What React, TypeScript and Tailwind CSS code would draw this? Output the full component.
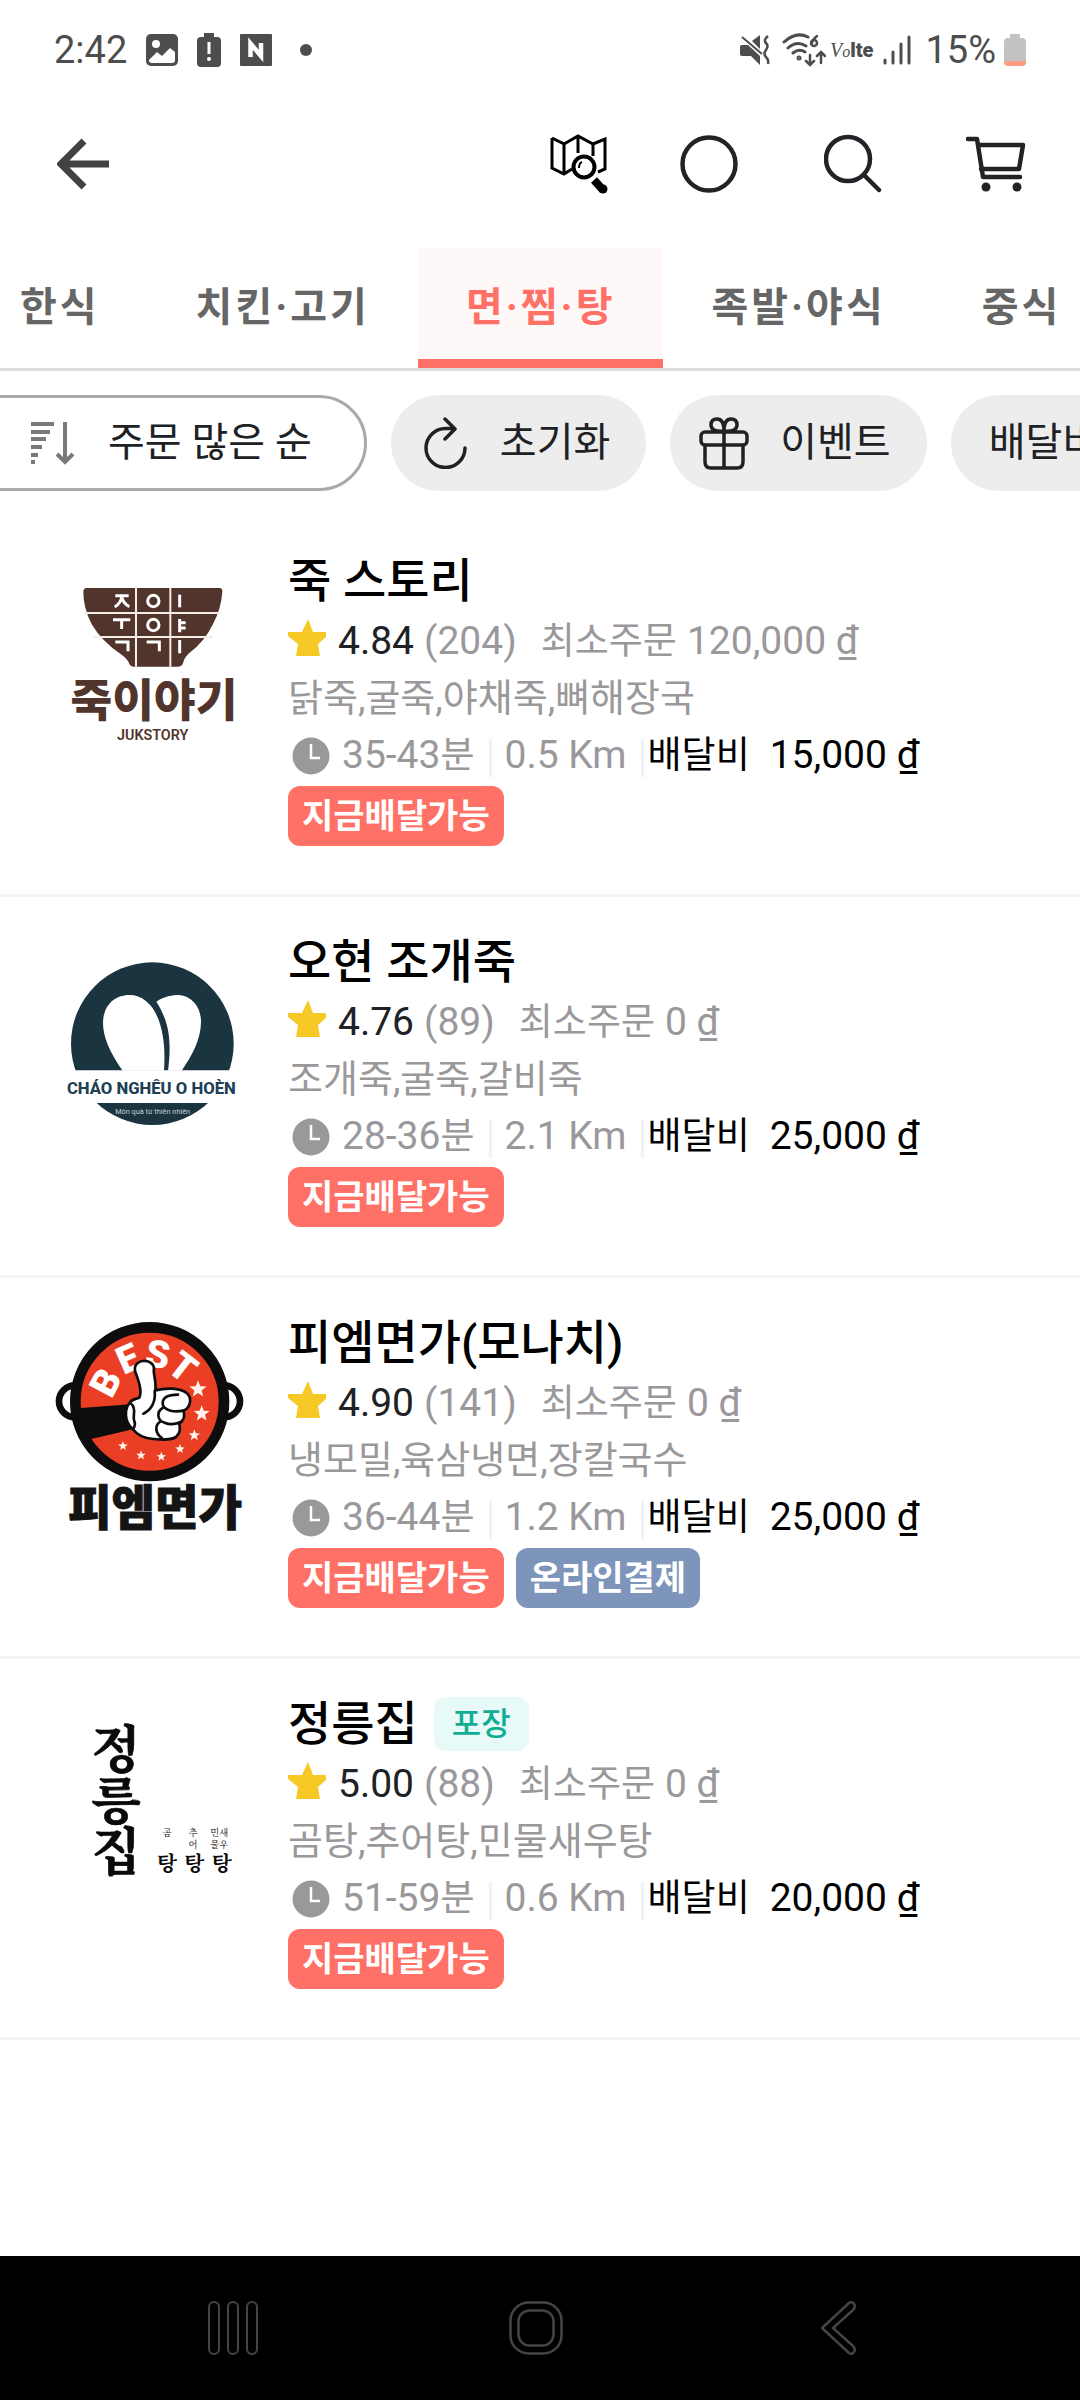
import React, { useState } from 'react';

interface Store {
  id: number;
  name: string;
  rating: string;
  reviews: number;
  minOrder: string;
  menus: string;
  time: string;
  distance: string;
  fee: string;
  takeout?: boolean;
  onlinePayment?: boolean;
  Logo: React.FC;
}

// Star polygon used inside the round badge logo
const starPoints = (cx: number, cy: number, r: number) =>
  Array.from({ length: 10 }, (_, i) => {
    const radius = i % 2 === 0 ? r : r * 0.42;
    const angle = -Math.PI / 2 + (i * Math.PI) / 5;
    return `${(cx + radius * Math.cos(angle)).toFixed(1)},${(cy + radius * Math.sin(angle)).toFixed(1)}`;
  }).join(' ');

const JukStoryLogo: React.FC = () => (
  <svg viewBox="0 0 720 780" className="h-[260px] w-[240px]" role="img" aria-label="죽이야기">
    <path
      d="M140 150h398q10 0 9 12-4 52-28 96-26 54-72 88-14 12-18 30-4 10-14 10H280q-8 0-12-8-4-14-26-30-56-38-86-88-26-48-26-98 0-12 10-12z"
      fill="#51342b"
    />
    <path d="M288 150v236M391 150v236M135 225h408M160 297h358" stroke="#f6eee6" strokeWidth="6" fill="none" />
    <g fill="none" stroke="#fff" strokeWidth="9">
      <path d="M226 173h40M246 175q-4 22-22 32M246 180q6 18 22 26" />
      <circle cx="340" cy="189" r="17" />
      <path d="M419 170v38" />
      <path d="M219 245h52M245 247v26" />
      <circle cx="340" cy="261" r="17" />
      <path d="M419 243v40M419 254h18M419 270h18" />
      <path d="M226 312h38v28M320 312h38v28M419 306v40" />
    </g>
    <text x="342" y="536" textAnchor="middle" fontSize="136" fontWeight="900" fill="#51342b" className="font-['Noto_Sans_CJK_KR',sans-serif]">
      죽이야기
    </text>
    <text x="338" y="606" textAnchor="middle" fontSize="43" fontWeight="600" fill="#51342b" className="font-['Roboto',sans-serif]">
      JUKSTORY
    </text>
  </svg>
);

const OHoenLogo: React.FC = () => (
  <svg viewBox="0 0 720 780" className="h-[260px] w-[240px]" role="img" aria-label="Cháo nghêu O Hoèn">
    <circle cx="337" cy="374" r="244" fill="#1a3440" />
    <path d="M80 454h510v98H80z" fill="#fff" />
    <path d="M248 455C208 400 189 352 189 312c0-52 34-84 79-84 68 0 114 82 104 227z" fill="#fff" />
    <path d="M384 455c12-92 2-150-35-207 24-16 48-20 68-20 40 4 66 36 66 80 0 52-26 100-58 147z" fill="#fff" />
    <text x="334" y="524" textAnchor="middle" fontSize="50" fontWeight="800" fill="#1f3f55" className="font-['Roboto',sans-serif]">
      CHÁO NGHÊU O HOÈN
    </text>
    <text x="338" y="585" textAnchor="middle" fontSize="22" fill="#c5d0d6" className="font-['Roboto',sans-serif]">
      Món quà từ thiên nhiên
    </text>
  </svg>
);

const PmNoodleLogo: React.FC = () => (
  <svg viewBox="0 0 720 780" className="h-[260px] w-[240px]" role="img" aria-label="피엠면가">
    <circle cx="105" cy="304" r="48" fill="#fff" stroke="#0d0d0d" strokeWidth="20" />
    <circle cx="552" cy="304" r="48" fill="#fff" stroke="#0d0d0d" strokeWidth="20" />
    <circle cx="329" cy="305" r="223" fill="#ea3f25" stroke="#0d0d0d" strokeWidth="32" />
    <path d="M112 325l160-12 10 74-128 30-40-8z" fill="#0d0d0d" />
    <g fill="#fff" fontSize="114" fontWeight="900" textAnchor="middle" className="font-['Roboto',sans-serif]">
      <text transform="translate(232 266) rotate(-62)">B</text>
      <text transform="translate(280 212) rotate(-24)">E</text>
      <text transform="translate(348 202) rotate(8)">S</text>
      <text transform="translate(404 232) rotate(38)">T</text>
    </g>
    {/* Thumbs-up hand */}
    <g fill="#fff" stroke="#0d0d0d" strokeWidth="8" strokeLinejoin="round" strokeLinecap="round">
      <path d="M272 305c-20 20-20 60 6 82 12 16 32 28 62 30 44 4 68 2 74-14 10-10 4-26 4-32 14-10 18-26 12-38 24-12 26-40 10-54-22-16-62-16-94-8 4-28-8-50-4-66-2-16-18-24-34-22-22 4-28 20-20 38 10 28 18 52 10 72-12 4-22 6-26 12z" />
      <path d="M274 312c16 12 4 34 8 48 4 10 2 22-4 28M344 273c4 34-12 58-34 68" fill="none" />
      <path d="M414 284c-30 0-46 10-46 26 0 22 36 28 62 22M368 324c-20 12-16 38 6 44 14 6 34 4 48-2M362 364c-18 10-18 36 4 50" fill="none" />
    </g>
    <g fill="#fff4ea">
      <polygon points={starPoints(474, 268, 27)} />
      <polygon points={starPoints(485, 341, 25)} />
      <polygon points={starPoints(463, 406, 18)} />
      <polygon points={starPoints(420, 447, 15)} />
      <polygon points={starPoints(364, 470, 15)} />
      <polygon points={starPoints(303, 466, 15)} />
      <polygon points={starPoints(249, 438, 15)} />
    </g>
    <text x="345" y="676" textAnchor="middle" fontSize="142" fontWeight="900" fill="#141414" stroke="#141414" strokeWidth="3" className="font-['Noto_Sans_CJK_KR',sans-serif]">
      피엠면가
    </text>
  </svg>
);

const JeongneungLogo: React.FC = () => (
  <svg viewBox="0 0 720 780" className="h-[260px] w-[240px]" role="img" aria-label="정릉집">
    <g fill="#0a0a0a" textAnchor="middle" className="font-['Noto_Serif_CJK_KR','Noto_Sans_CJK_KR',sans-serif]">
      <g fontSize="154" fontWeight="700" stroke="#0a0a0a" strokeWidth="2">
        <text x="228" y="262">정</text>
        <text x="228" y="414">릉</text>
        <text x="228" y="566">집</text>
      </g>
      <g fontSize="28">
        <text x="381" y="465">곰</text>
        <text x="459" y="465">추</text>
        <text x="459" y="501">어</text>
        <text x="538" y="465">민새</text>
        <text x="538" y="501">물우</text>
      </g>
      <g fontSize="62" fontWeight="700">
        <text x="381" y="570">탕</text>
        <text x="463" y="570">탕</text>
        <text x="545" y="570">탕</text>
      </g>
    </g>
  </svg>
);

const stores: Store[] = [
  {
    id: 1,
    name: '죽 스토리',
    rating: '4.84',
    reviews: 204,
    minOrder: '120,000',
    menus: '닭죽,굴죽,야채죽,뼈해장국',
    time: '35-43',
    distance: '0.5',
    fee: '15,000',
    Logo: JukStoryLogo,
  },
  {
    id: 2,
    name: '오현 조개죽',
    rating: '4.76',
    reviews: 89,
    minOrder: '0',
    menus: '조개죽,굴죽,갈비죽',
    time: '28-36',
    distance: '2.1',
    fee: '25,000',
    Logo: OHoenLogo,
  },
  {
    id: 3,
    name: '피엠면가(모나치)',
    rating: '4.90',
    reviews: 141,
    minOrder: '0',
    menus: '냉모밀,육삼냉면,장칼국수',
    time: '36-44',
    distance: '1.2',
    fee: '25,000',
    onlinePayment: true,
    Logo: PmNoodleLogo,
  },
  {
    id: 4,
    name: '정릉집',
    rating: '5.00',
    reviews: 88,
    minOrder: '0',
    menus: '곰탕,추어탕,민물새우탕',
    time: '51-59',
    distance: '0.6',
    fee: '20,000',
    takeout: true,
    Logo: JeongneungLogo,
  },
];

const categories = ['한식', '치킨·고기', '면·찜·탕', '족발·야식', '중식'];

const StatusBar: React.FC = () => (
  <div className="flex h-24 items-center justify-between px-[54px] pt-1 text-[38px] leading-none text-[#4d4d4d]">
    <div className="flex items-center">
      <span>2:42</span>
      <svg viewBox="0 0 32 32" className="ml-[19px] size-8">
        <rect width="32" height="32" rx="5" fill="#4d4d4d" />
        <circle cx="10" cy="10" r="4" fill="#fff" />
        <path d="M3 26l8-8 5 4 8-8 5 4v8q0 3-3 3H6q-3 0-3-3z" fill="#fff" />
      </svg>
      <svg viewBox="0 0 24 34" className="ml-[19px] h-[34px] w-6">
        <path d="M7 0h10v4h3q4 0 4 4v22q0 4-4 4H4q-4 0-4-4V8q0-4 4-4h3z" fill="#4d4d4d" />
        <path d="M10.500 9h3v12h-3z" fill="#fff" />
        <circle cx="12" cy="26" r="2" fill="#fff" />
      </svg>
      <svg viewBox="0 0 32 32" className="ml-[19px] size-8">
        <rect width="32" height="32" rx="1" fill="#4d4d4d" />
        <path d="M10.500 23V9.500L21 22V9" stroke="#fff" strokeWidth="4.500" fill="none" />
      </svg>
      <span className="ml-7 size-3 rounded-full bg-[#4d4d4d]" />
    </div>
    <div className="flex items-center">
      <svg viewBox="0 0 30 30" className="size-[30px]" fill="#4d4d4d">
        <path d="M12 6l8-6v14zM0 12q0-2 2-2h6l12 11v9l-9-9H2q-2 0-2-2z" />
        <path d="M2 2l20 17" stroke="#4d4d4d" strokeWidth="2" />
        <path d="M28 1q-5 4-2 7t0 7 0 7 2 7" fill="none" stroke="#4d4d4d" strokeWidth="2.500" />
      </svg>
      <svg viewBox="0 0 44 34" className="ml-3 h-[34px] w-11" fill="none" stroke="#4d4d4d" strokeWidth="3" strokeLinecap="round">
        <path d="M2 9q12-11 24-5M6 15q9-8 18-2M11 20q6-5 12-1" />
        <circle cx="17" cy="25" r="1" />
        <path d="M35 3q-5 4-5 7M28 22v9M24 28l4 4 4-4M39 30V20M35 23l4-4 4 4" strokeWidth="2.500" />
        <circle cx="32" cy="10" r="3" strokeWidth="2.500" />
      </svg>
      <span className="ml-1 flex items-baseline">
        <i className="font-['Liberation_Serif',serif] text-[20px]">V</i>
        <i className="font-['Liberation_Serif',serif] text-[16px]">o</i>
        <b className="text-[20px] font-black">lte</b>
      </span>
      <svg viewBox="0 0 28 30" className="ml-2.5 h-[30px] w-7" stroke="#4d4d4d" strokeWidth="3" strokeLinecap="round">
        <path d="M2 25v3M10 17v11M18 9v19M26 2v26" />
      </svg>
      <span className="ml-3.5">15%</span>
      <svg viewBox="0 0 22 32" className="ml-2 h-8 w-[22px]">
        <path d="M6 0h10v4h2q4 0 4 4v20H0V8q0-4 4-4h2z" fill="#c2c2c2" />
        <path d="M0 27h22v1q0 4-4 4H4q-4 0-4-4z" fill="#ff9c80" />
      </svg>
    </div>
  </div>
);

const Header: React.FC = () => (
  <header className="flex h-[136px] items-center justify-between pl-[57px] pr-[54px]">
    <button aria-label="뒤로">
      <svg viewBox="0 0 52 52" className="size-[52px]" fill="none" stroke="#424242" strokeWidth="7">
        <path d="M52 26H6M27 3L4 26l23 23" />
      </svg>
    </button>
    <div className="flex items-center">
      <button aria-label="지도 검색">
        <svg viewBox="0 0 58 60" className="h-[60px] w-[58px]" fill="none" stroke="#000" strokeWidth="3">
          <path d="M2 4v30l12 6 8-5M2 4l12 6v30M14 10l14-8 15 8 12-5v30l-7 3M28 2v17M43 10v12" />
          <circle cx="34" cy="33" r="10.500" strokeWidth="4" />
          <path d="M29 34q0-5 3-6" strokeWidth="2" />
          <path d="M44 46l9 10" strokeWidth="8" />
          <circle cx="53" cy="55" r="4.500" fill="#000" stroke="none" />
        </svg>
      </button>
      <button aria-label="원형" className="ml-[72px]">
        <svg viewBox="0 0 58 60" className="h-[60px] w-[58px]" fill="none" stroke="#212327" strokeWidth="4.500">
          <circle cx="29" cy="30" r="26.500" />
        </svg>
      </button>
      <button aria-label="검색" className="ml-[86px]">
        <svg viewBox="0 0 58 60" className="h-[60px] w-[58px]" fill="none" stroke="#212327" strokeWidth="4.500" strokeLinecap="round">
          <circle cx="24" cy="25" r="22" />
          <path d="M40 41l15 15" />
        </svg>
      </button>
      <button aria-label="장바구니" className="ml-[84px]">
        <svg viewBox="0 0 60 60" className="size-[60px]" fill="none" stroke="#212327" strokeWidth="4.500" strokeLinecap="round" strokeLinejoin="round">
          <path d="M2 5h9l6 38h37M12 11h45l-4 24H15" />
          <circle cx="20" cy="53" r="4.500" fill="#212327" stroke="none" />
          <circle cx="51" cy="53" r="4.500" fill="#212327" stroke="none" />
        </svg>
      </button>
    </div>
  </header>
);

const FilterBar: React.FC = () => (
  <div className="flex gap-6 overflow-hidden whitespace-nowrap pb-[25px] pt-6 text-[40px] leading-none text-[#202124]">
    <button className="-ml-12 flex h-24 shrink-0 items-center rounded-full border-[3px] border-[#a9a9a9] pl-[76px] pr-[52px]">
      <svg viewBox="0 0 44 44" className="size-11 text-[#7a7a7a]" fill="none" stroke="currentColor" strokeWidth="4">
        <path d="M0 3h23M0 11h19M0 18h15M0 26h11M0 34h7M0 41h4" />
        <path d="M34 1v40M26 33l8 8 8-8" />
      </svg>
      <span className="ml-[33px]">주문 많은 순</span>
    </button>
    <button className="flex h-24 shrink-0 items-center rounded-full bg-[#ededed] pl-8 pr-9">
      <svg viewBox="0 0 44 52" className="h-[52px] w-11" fill="none" stroke="#202124" strokeWidth="3.500" strokeLinecap="round" strokeLinejoin="round">
        <path d="M42 31a19.500 19.500 0 1 1-19.500-19.500H31M22 2l10 10-10 10" />
      </svg>
      <span className="ml-[33px]">초기화</span>
    </button>
    <button className="flex h-24 shrink-0 items-center rounded-full bg-[#ededed] pl-[29px] pr-9">
      <svg viewBox="0 0 50 54" className="h-[54px] w-[50px]" fill="none" stroke="#202124" strokeWidth="3.500">
        <rect x="2" y="16" width="46" height="13" rx="4" />
        <path d="M6 29v17q0 6 6 6h26q6 0 6-6V29M25 14v38M25 15q-13 1-13-6 0-6 6-6 7 0 7 12 0-12 7-12 6 0 6 6 0 7-13 6" />
      </svg>
      <span className="ml-[31px]">이벤트</span>
    </button>
    <button className="flex h-24 shrink-0 items-center rounded-full bg-[#ededed] px-[38px]">배달비</button>
  </div>
);

const StoreRow: React.FC<{ store: Store }> = ({ store }) => {
  const { Logo } = store;
  return (
    <li className="flex border-b-[3px] border-[#f3f4f8] pl-10">
      <div className="h-[260px] w-[248px] shrink-0 pt-[22px]">
        <Logo />
      </div>
      <div className="whitespace-nowrap pb-12 pt-[33px] text-[39px] leading-[57px] text-[#9a989a]">
        <div className="flex h-16 items-center">
          <h2 className="text-[47px] font-medium leading-[64px] text-black">{store.name}</h2>
          {store.takeout && (
            <span className="ml-4 rounded-xl bg-[#e8faf7] px-[18px] text-[32px] font-medium leading-[54px] text-[#0fae94]">포장</span>
          )}
        </div>
        <p className="flex h-[57px]">
          <svg viewBox="0 0 38 38" className="mt-1.5 size-[38px]" fill="#f7c927">
            <path d="M20 0l5 13h13v5l-8 7 2 12H8l2-12-10-8v-4h14z" />
          </svg>
          <span className="ml-3 text-[#202124]">{store.rating}</span>
          <span className="ml-2.5">({store.reviews})</span>
          <span className="ml-6 text-[37px]">최소주문</span>
          <span className="ml-2.5">{store.minOrder} ₫</span>
        </p>
        <p className="h-[57px] text-[38px]">{store.menus}</p>
        <p className="flex h-[57px]">
          <svg viewBox="0 0 38 38" className="ml-1 mt-2.5 size-[38px]">
            <circle cx="19" cy="19" r="18.500" fill="#9a989a" />
            <path d="M19 7v14h9" fill="none" stroke="#fff" strokeWidth="2.500" />
          </svg>
          <span className="ml-3">{store.time}</span>
          <span className="text-[37px]">분</span>
          <span className="ml-3.5 mt-3 h-[38px] w-[3px] bg-[#f1f1f6]" />
          <span className="ml-[13px]">{store.distance} Km</span>
          <span className="ml-3.5 mt-3 h-[38px] w-[3px] bg-[#f1f1f6]" />
          <span className="ml-1 text-[37px] text-black">배달비</span>
          <span className="ml-5 text-black">{store.fee} ₫</span>
        </p>
        <div className="mt-0.5 flex gap-3 text-[34px] font-bold leading-[60px] text-white">
          <span className="rounded-xl bg-[#ff7166] px-3.5">지금배달가능</span>
          {store.onlinePayment && <span className="rounded-xl bg-[#7d95bb] px-3.5">온라인결제</span>}
        </div>
      </div>
    </li>
  );
};

// Android system navigation
const SystemNav: React.FC = () => (
  <footer className="grid h-36 grid-cols-3 place-items-center bg-black pl-[82px] pr-[90px]">
    <button aria-label="최근 앱">
      <svg viewBox="0 0 50 54" className="h-[54px] w-[50px]" fill="none" stroke="#444" strokeWidth="2">
        <rect x="1" y="1" width="10" height="52" rx="5" />
        <rect x="20" y="1" width="10" height="52" rx="5" />
        <rect x="39" y="1" width="10" height="52" rx="5" />
      </svg>
    </button>
    <button aria-label="홈">
      <svg viewBox="0 0 54 54" className="size-[54px]" fill="none" stroke="#444" strokeWidth="2.500">
        <rect x="1.500" y="1.500" width="51" height="51" rx="18" />
        <rect x="9.500" y="9.500" width="35" height="35" rx="11" />
      </svg>
    </button>
    <button aria-label="이전">
      <svg viewBox="0 0 36 54" className="h-[54px] w-9" fill="none" stroke="#444" strokeWidth="2.500" strokeLinejoin="round">
        <path d="M28 2L1 27l27 25q3 2 5-1 2-3-1-6L12 27 32 9q3-3 1-6-2-3-5-1z" />
      </svg>
    </button>
  </footer>
);

const App: React.FC = () => {
  const [category, setCategory] = useState('면·찜·탕');

  return (
    <div className="flex min-h-screen flex-col overflow-hidden bg-white font-['Roboto','Noto_Sans_CJK_KR',sans-serif]">
      <StatusBar />
      <Header />

      {/* Category tabs */}
      <nav className="mt-4 flex h-[123px] overflow-hidden whitespace-nowrap border-b-[3px] border-[#dedede] text-[40px] font-bold tracking-[3px]">
        {categories.map((name) => (
          <button
            key={name}
            onClick={() => setCategory(name)}
            className={
              name === category
                ? 'shrink-0 border-b-[9px] border-[#ff7166] bg-[#fff8f8] px-12 pt-[9px] text-[#ff7166] first:-ml-7'
                : 'shrink-0 px-12 text-[#666] first:-ml-7'
            }
          >
            {name}
          </button>
        ))}
      </nav>

      <FilterBar />

      <ul className="flex-1">
        {stores.map((store) => (
          <StoreRow key={store.id} store={store} />
        ))}
      </ul>

      <SystemNav />
    </div>
  );
};

export default App;
